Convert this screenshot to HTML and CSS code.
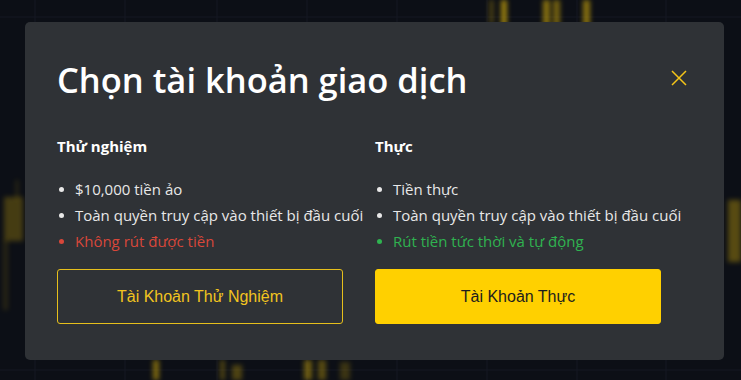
FILE: index.html
```html
<!DOCTYPE html>
<html lang="vi">
<head>
<meta charset="utf-8">
<link rel="stylesheet" href="styles.css">
</head>
<body>
<div class="chart">
  <svg width="741" height="380" viewBox="0 0 741 380">
    <g class="grid">
      <line x1="35" y1="0" x2="35" y2="380"/>
      <line x1="125" y1="0" x2="125" y2="380"/>
      <line x1="217" y1="0" x2="217" y2="380"/>
      <line x1="307" y1="0" x2="307" y2="380"/>
      <line x1="397" y1="0" x2="397" y2="380"/>
      <line x1="487" y1="0" x2="487" y2="380"/>
      <line x1="577" y1="0" x2="577" y2="380"/>
      <line x1="666" y1="0" x2="666" y2="380"/>
      <line x1="0" y1="17" x2="741" y2="17"/>
      <line x1="0" y1="370" x2="741" y2="370"/>
    </g>
    <g class="candles">
      <rect x="501" y="0" width="6" height="26" opacity="0.75"/>
      <rect x="489" y="0" width="5" height="24" opacity="0.3"/>
      <rect x="543" y="0" width="7" height="26" opacity="0.65"/>
      <rect x="553" y="0" width="7" height="26" opacity="0.55"/>
      <rect x="583" y="0" width="7" height="26" opacity="0.65"/>
      <rect x="4" y="197" width="19" height="44" opacity="0.3"/>
      <rect x="16" y="180" width="2" height="20" opacity="0.25"/>
      <rect x="3" y="240" width="5" height="70" opacity="0.15"/>
      <rect x="728" y="200" width="13" height="62" opacity="0.4"/>
      <rect x="153" y="360" width="6" height="20" opacity="0.6"/>
      <rect x="220" y="360" width="5" height="20" opacity="0.35"/>
      <rect x="232" y="365" width="10" height="15" opacity="0.35"/>
      <rect x="304" y="360" width="8" height="20" opacity="0.5"/>
      <rect x="318" y="360" width="8" height="20" opacity="0.4"/>
      <rect x="340" y="362" width="10" height="18" opacity="0.25"/>
    </g>
  </svg>
</div>

<div class="overlay">
  <section class="modal">
    <header class="modal-head">
      <h1 class="modal-title">Chọn tài khoản giao dịch</h1>
      <button class="close" aria-label="Đóng">
        <svg width="16" height="16" viewBox="0 0 16 16"><path d="M1 1 L15 15 M15 1 L1 15" stroke="#f5c518" stroke-width="1.5" fill="none"/></svg>
      </button>
    </header>
    <div class="cols">
      <div class="col">
        <h2 class="col-title">Thử nghiệm</h2>
        <ul class="feats">
          <li>$10,000 tiền ảo</li>
          <li>Toàn quyền truy cập vào thiết bị đầu cuối</li>
          <li class="bad">Không rút được tiền</li>
        </ul>
        <button class="btn btn-outline">Tài Khoản Thử Nghiệm</button>
      </div>
      <div class="col">
        <h2 class="col-title">Thực</h2>
        <ul class="feats">
          <li>Tiền thực</li>
          <li>Toàn quyền truy cập vào thiết bị đầu cuối</li>
          <li class="good">Rút tiền tức thời và tự động</li>
        </ul>
        <button class="btn btn-solid">Tài Khoản Thực</button>
      </div>
    </div>
  </section>
</div>
</body>
</html>
```

FILE: styles.css
```css
html, body {
  margin: 0;
  padding: 0;
}
body {
  width: 741px;
  height: 380px;
  background: #0c0f16;
  overflow: hidden;
  font-family: "Open Sans", "Noto Sans", sans-serif;
  position: relative;
}
.chart {
  position: absolute;
  inset: 0;
}
.chart svg {
  display: block;
}
.grid line {
  stroke: #151922;
  stroke-width: 1;
}
.candles rect {
  fill: #c9a40c;
  filter: blur(2.5px);
}
.overlay {
  position: absolute;
  inset: 0;
  padding: 22px 0 0 25px;
}
.modal {
  box-sizing: border-box;
  width: 699px;
  height: 338px;
  background: #2f3236;
  border-radius: 5px;
  padding: 0 32px;
}
.modal-head {
  display: flex;
  align-items: center;
  justify-content: space-between;
  height: 114px;
}
.modal-title {
  margin: 0;
  font-weight: 600;
  font-size: 34.5px;
  color: #ffffff;
  line-height: 40px;
  padding-top: 2px;
}
.close {
  background: none;
  border: 0;
  padding: 0;
  margin-right: 5px;
  width: 16px;
  height: 16px;
  display: flex;
  margin-top: -3px;
}
.cols {
  display: grid;
  grid-template-columns: 318px 318px;
}
.col-title {
  margin: 0;
  font-size: 15px;
  font-weight: 700;
  color: #ffffff;
  line-height: 20px;
}
.feats {
  margin: 20px 0 0;
  padding: 0;
  list-style: none;
}
.feats li {
  position: relative;
  padding-left: 18px;
  font-size: 15px;
  line-height: 26px;
  color: #e8e8e8;
}
.feats li::before {
  content: "";
  position: absolute;
  left: 2px;
  top: 11px;
  width: 5px;
  height: 5px;
  border-radius: 50%;
  background: currentColor;
}
.feats li.bad {
  color: #d8473a;
}
.feats li.good {
  color: #2fb350;
}
.btn {
  box-sizing: border-box;
  display: block;
  width: 286px;
  height: 55px;
  margin-top: 15px;
  border-radius: 3px;
  font-family: "Liberation Sans", Arial, sans-serif;
  font-size: 16px;
  cursor: pointer;
}
.btn-outline {
  background: transparent;
  border: 1px solid #e6bf1c;
  color: #f2c41f;
}
.btn-solid {
  background: #ffd000;
  border: 1px solid #ffd000;
  color: #1d1d1d;
}
```
